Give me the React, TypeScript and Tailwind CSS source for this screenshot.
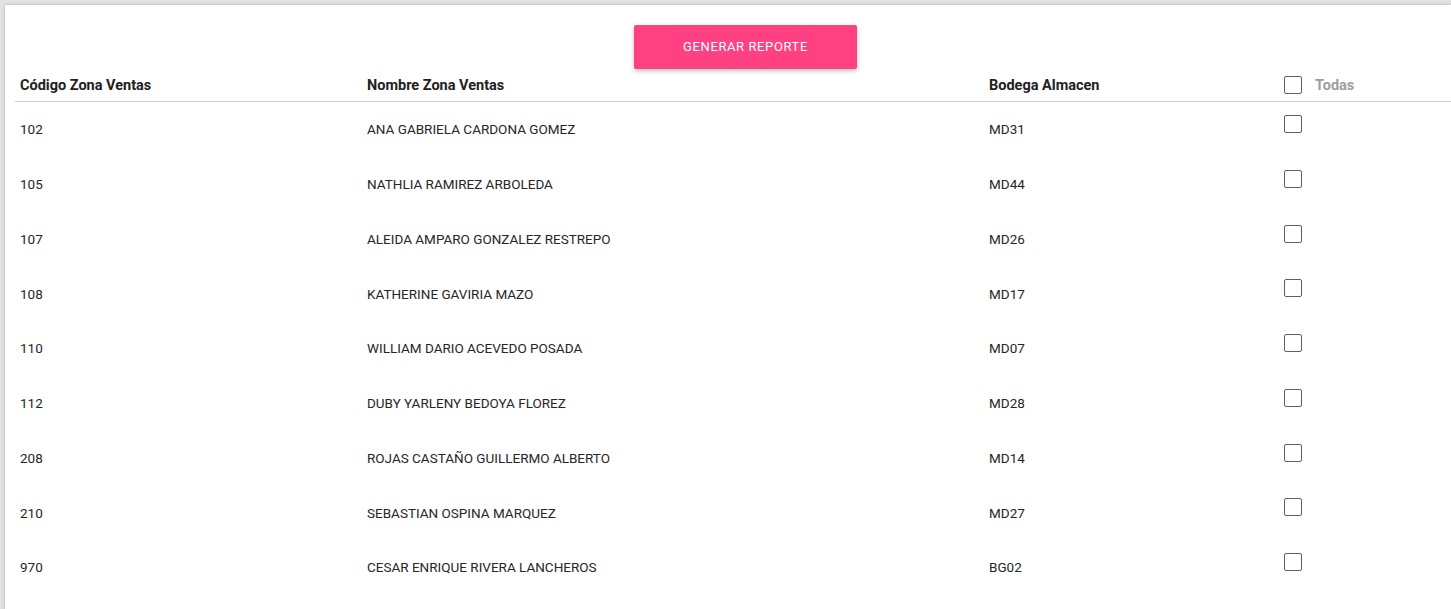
import React from "react";

const rows = [
  ["102", "ANA GABRIELA CARDONA GOMEZ", "MD31"],
  ["105", "NATHLIA RAMIREZ ARBOLEDA", "MD44"],
  ["107", "ALEIDA AMPARO GONZALEZ RESTREPO", "MD26"],
  ["108", "KATHERINE GAVIRIA MAZO", "MD17"],
  ["110", "WILLIAM DARIO ACEVEDO POSADA", "MD07"],
  ["112", "DUBY YARLENY BEDOYA FLOREZ", "MD28"],
  ["208", "ROJAS CASTAÑO GUILLERMO ALBERTO", "MD14"],
  ["210", "SEBASTIAN OSPINA MARQUEZ", "MD27"],
  ["970", "CESAR ENRIQUE RIVERA LANCHEROS", "BG02"],
];

function Box() {
  return <div className="w-[18px] h-[18px] border-[1.5px] border-[#5f5f5f] rounded-[2px] bg-white" />;
}

export default function App() {
  return (
    <div className="min-h-[609px] bg-[#e2e2e2] pl-[5px] pt-[5px]" style={{ fontFamily: "Roboto, 'Liberation Sans', sans-serif" }}>
      <div className="bg-white min-h-[604px] shadow-[0_0_3px_rgba(0,0,0,0.25)] pl-[10px] pt-[20px]">
        <div className="flex pl-[619px]">
          <button className="w-[223px] h-[44px] bg-[#ff4081] text-white text-[13px] tracking-[0.6px] rounded-[2px] shadow-[0_2px_4px_rgba(0,0,0,0.25)]">
            GENERAR REPORTE
          </button>
        </div>
        <div className="flex h-[33px] items-center border-b border-[#d0d0d0] text-[14.5px] font-bold text-[#212121]">
          <div className="w-[347px] pl-[5px] pt-[1px]">Código Zona Ventas</div>
          <div className="w-[622px] pl-[5px] pt-[1px]">Nombre Zona Ventas</div>
          <div className="w-[295px] pl-[5px] pt-[1px]">Bodega Almacen</div>
          <div className="flex items-center pl-[5px] gap-[13px] self-start pt-[5px]">
            <Box />
            <span className="text-[#9e9e9e] leading-[18px] pt-[3px]">Todas</span>
          </div>
        </div>
        {rows.map((r) => (
          <div key={r[0]} className="flex h-[54.75px] items-center text-[13.5px] text-[#262626]">
            <div className="w-[347px] pl-[5px]">{r[0]}</div>
            <div className="w-[622px] pl-[5px]">{r[1]}</div>
            <div className="w-[295px] pl-[5px]">{r[2]}</div>
            <div className="pl-[5px] self-start pt-[13px]">
              <Box />
            </div>
          </div>
        ))}
      </div>
    </div>
  );
}
